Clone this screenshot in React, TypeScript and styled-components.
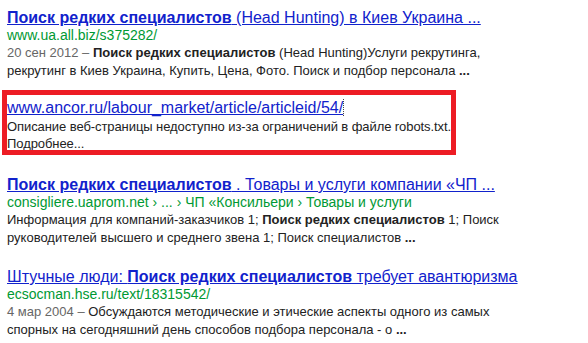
import styled, { createGlobalStyle } from "styled-components";

const GlobalStyle = createGlobalStyle`
  html, body {
    margin: 0;
    padding: 0;
    background: #fff;
  }
  body {
    font-family: "Liberation Sans", Arial, sans-serif;
    color: #222;
  }
`;

const Page = styled.div`
  padding: 9px 0 0 7px;
  width: 581px;
  height: 334px;
  overflow: hidden;
`;

const Result = styled.div<{ $gap?: number }>`
  position: relative;
  margin-bottom: ${(p) => p.$gap ?? 21}px;
`;

const Title = styled.a<{ $space?: number }>`
  display: block;
  font-size: 16px;
  line-height: 18px;
  margin-bottom: ${(p) => p.$space ?? 0}px;
  color: #1122cc;
  text-decoration: underline;
  white-space: nowrap;
  b {
    font-weight: bold;
  }
`;

const Cite = styled.div`
  font-size: 14px;
  line-height: 17px;
  color: #009933;
  white-space: nowrap;
`;

const Snippet = styled.div<{ $lh?: number; $tight?: boolean }>`
  font-size: 13px;
  line-height: ${(p) => p.$lh ?? 18}px;
  letter-spacing: ${(p) => (p.$tight ? "-0.08px" : "normal")};
  color: #222;
  white-space: nowrap;
  b {
    font-weight: bold;
  }
`;

const Date = styled.span`
  color: #666;
`;

const FocusMark = styled.span`
  border-right: 1px dotted #444;
`;

const Frame = styled.div`
  position: absolute;
  left: -5px;
  top: -9px;
  width: 454px;
  height: 65px;
  box-sizing: border-box;
  border: 5px solid #ed1c24;
  pointer-events: none;
`;

export default function App() {
  return (
    <>
      <GlobalStyle />
      <Page>
        <Result $gap={19}>
          <Title href="#">
            <b>Поиск редких специалистов</b> (Head Hunting) в Киев Украина ...
          </Title>
          <Cite>www.ua.all.biz/s375282/</Cite>
          <Snippet>
            <Date>20 сен 2012 – </Date>
            <b>Поиск редких специалистов</b> (Head Hunting)Услуги рекрутинга,
            <br />
            рекрутинг в Киев Украина, Купить, Цена, Фото. Поиск и подбор персонала <b>...</b>
          </Snippet>
        </Result>

        <Result $gap={24}>
          <Title href="#" $space={1}>
            <FocusMark>www.ancor.ru/labour_market/article/articleid/54/</FocusMark>
          </Title>
          <Snippet $lh={17} $tight>
            Описание веб-страницы недоступно из-за ограничений в файле robots.txt.
            <br />
            Подробнее...
          </Snippet>
          <Frame />
        </Result>

        <Result>
          <Title href="#">
            <b>Поиск редких специалистов</b> . Товары и услуги компании «ЧП ...
          </Title>
          <Cite>consigliere.uaprom.net › ... › ЧП «Консильери › Товары и услуги</Cite>
          <Snippet>
            Информация для компаний-заказчиков 1; <b>Поиск редких специалистов</b> 1; Поиск
            <br />
            руководителей высшего и среднего звена 1; Поиск специалистов <b>...</b>
          </Snippet>
        </Result>

        <Result $gap={0}>
          <Title href="#">
            Штучные люди: <b>Поиск редких специалистов</b> требует авантюризма
          </Title>
          <Cite>ecsocman.hse.ru/text/18315542/</Cite>
          <Snippet>
            <Date>4 мар 2004 – </Date>Обсуждаются методические и этические аспекты одного из самых
            <br />
            спорных на сегодняшний день способов подбора персонала - о <b>...</b>
          </Snippet>
        </Result>
      </Page>
    </>
  );
}
